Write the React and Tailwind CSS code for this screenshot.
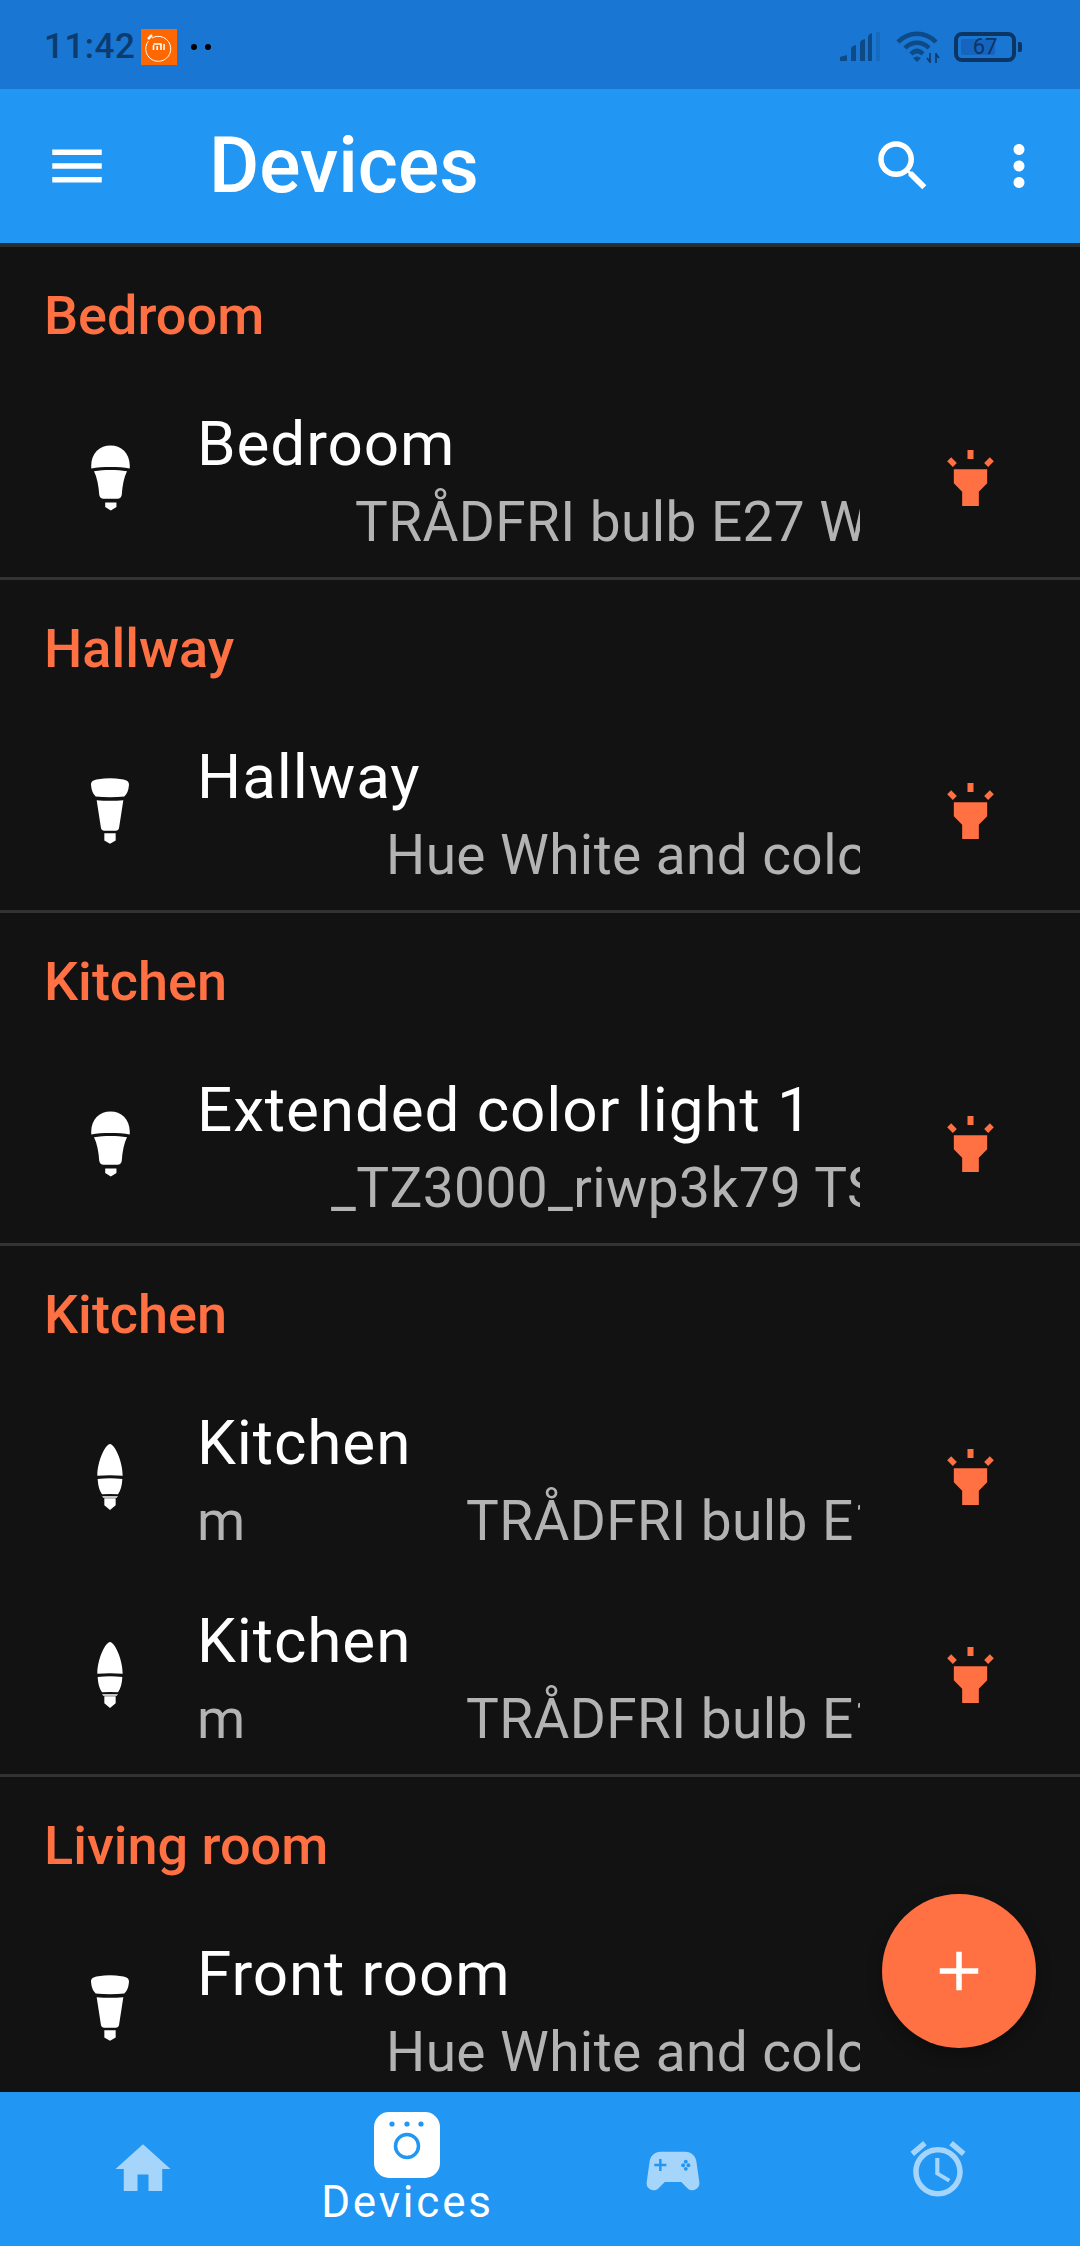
import React from "react";

const ORANGE = "#FF7043";

function Bulb({ kind }) {
  if (kind === "a19")
    return (
      <svg width="39" height="66" viewBox="0 0 118 197" fill="#fff">
        <path d="M1 70C-3 25 25 0 59 0C93 0 121 25 117 70C85 64 33 64 1 70Z" />
        <path d="M9 78C40 73 78 73 109 78C100 96 95 120 93 150Q91 161 80 161H38Q27 161 25 150C23 120 18 96 9 78Z" />
        <path d="M43 173H77V186L60 197L43 186Z" />
      </svg>
    );
  if (kind === "br30")
    return (
      <svg width="38" height="66" viewBox="0 0 114 197" fill="#fff">
        <path d="M22 3Q57 -2 92 3C108 5 114 10 114 20Q112 45 100 55Q57 60 14 55Q2 45 0 20C0 10 6 5 22 3Z" />
        <path d="M17 66Q57 70 97 66L84 150Q82 158 75 158H39Q32 158 30 150Z" />
        <path d="M40 165H74V187L57 197L40 187Z" />
      </svg>
    );
  return (
    <svg width="26" height="66" viewBox="0 0 76 198" fill="#fff">
      <path d="M0 95C0 50 25 0 38 0C51 0 76 50 76 95Q38 92 0 95Z" />
      <path d="M1 105Q38 100 75 105C74 125 70 140 62 151Q38 149 14 151C6 140 2 125 1 105Z" />
      <path d="M14 157H62L58 161H18Z" />
      <path d="M21 163H55V184L38 198L21 184Z" />
    </svg>
  );
}

function Flash() {
  return (
    <svg width="47" height="56" viewBox="320 90 140 168" fill={ORANGE}>
      <path d="M381 90H399V117H381Z" />
      <path d="M320 124L332 112L349 129L337 141Z" />
      <path d="M460 124L448 112L431 129L443 141Z" />
      <path d="M340 148H440V190L415 215V258H365V215L340 190Z" />
    </svg>
  );
}

function Row({ kind, name, pre, subClass, sub }) {
  return (
    <div className="flex h-[198px] items-center">
      <div className="flex w-[197px] justify-center pl-[23px]">
        <Bulb kind={kind} />
      </div>
      <div className="h-full w-[663px] overflow-hidden whitespace-nowrap pt-[26px]">
        <div className="text-[62px] leading-[78px] tracking-[0.9px] text-white">{name}</div>
        <div className={"flex text-[55px] leading-[78px] tracking-[0.4px] text-[#b3b3b3] " + subClass}>
          {pre ? <span className="w-[269px] shrink-0">{pre}</span> : null}
          <span>{sub}</span>
        </div>
      </div>
      <div className="flex flex-1 justify-center">
        <Flash />
      </div>
    </div>
  );
}

function Section({ title, last, children }) {
  return (
    <section className={last ? "" : "border-b-[3px] border-[#333333]"}>
      <div className="h-[132px] pl-[44px] pt-[37px] text-[54px] font-medium leading-[64px] text-[#FF7043]">{title}</div>
      {children}
    </section>
  );
}

function NavIcon({ d, extra }) {
  return (
    <svg width="66" height="66" viewBox="0 0 24 24" fill="#A6D5FB">
      <path d={d} />
      {extra}
    </svg>
  );
}

export default function App() {
  return (
    <div className="relative flex h-[2246px] w-[1080px] flex-col overflow-hidden bg-[#121212] font-['Roboto',sans-serif]">
      {/* status bar */}
      <div className="flex h-[89px] shrink-0 items-center bg-[#1976D2] pl-[44px] pr-[58px] pt-[4px]">
        <span className="text-[35px] font-medium leading-none tracking-[0.5px] text-[#0c3b6e]">11:42</span>
        <div className="ml-[6px] flex h-[36px] w-[36px] items-center justify-center bg-[#FF6700]">
          <svg width="30" height="30" viewBox="0 0 30 30" fill="none">
            <path d="M8 6A12.5 12.5 0 1 1 4.5 9" stroke="#fff" strokeWidth="1" />
            <path d="M4 7L8 3" stroke="#fff" strokeWidth="2.5" />
            <path d="M9.5 12H17V18M13.2 14V18M9.5 13V18M20 12V18" stroke="#fff" strokeWidth="1.6" />
          </svg>
        </div>
        <div className="ml-[14px] h-[6px] w-[6px] rounded-full bg-black" />
        <div className="ml-[8px] h-[6px] w-[6px] rounded-full bg-black" />
        <div className="flex-1" />
        <svg width="40" height="30" viewBox="0 0 40 30" fill="#0d4a86">
          <path d="M0 29V25L7 23V29Z" />
          <path d="M11 29V17Q11 15 13 14L16 13V29Z" />
          <path d="M20 29V11Q20 9 22 8L25 7V29Z" />
          <path d="M28 29V5Q28 3 30 2L32 1V29Z" />
          <path d="M36 29V0L40 0V29Z" opacity="0.25" />
        </svg>
        <svg className="ml-[16px]" width="44" height="32" viewBox="0 0 44 32" fill="none" stroke="#0d4a86" strokeWidth="4.5">
          <path d="M2 11C13 0 29 0 40 11" />
          <path d="M9 17C16 10 26 10 33 17" />
          <path d="M15 23C19 19 23 19 27 23" />
          <path d="M21 31L17 27Q21 24 25 27Z" fill="#0d4a86" stroke="none" />
          <path d="M34 22V32M31 27L34 31M40 32V22M43 27L40 23" strokeWidth="1.6" stroke="#0a3a6c" />
        </svg>
        <div className="relative ml-[14px] flex h-[30px] w-[62px] items-center justify-center rounded-[8px] border-[4px] border-[#0b3563]">
          <div className="absolute bottom-[3px] left-[3px] top-[3px] w-[34px] rounded-[2px] bg-[#1565C0]" />
          <span className="relative text-[22px] leading-none text-[#0b3563]">67</span>
        </div>
        <div className="ml-[2px] h-[10px] w-[4px] rounded-r-[2px] bg-[#0b3563]" />
      </div>

      {/* toolbar */}
      <div className="flex h-[154px] shrink-0 items-center bg-[#2196F3] pl-[44px] text-white">
        <svg width="66" height="66" viewBox="0 0 24 24" fill="#fff">
          <path d="M3 18h18v-2H3v2zm0-5h18v-2H3v2zm0-7v2h18V6H3z" />
        </svg>
        <h1 className="ml-[99px] text-[77px] font-medium leading-none">Devices</h1>
        <div className="flex-1" />
        <svg width="66" height="66" viewBox="0 0 24 24" fill="#fff">
          <path d="M15.5 14h-.79l-.28-.27C15.41 12.59 16 11.11 16 9.5 16 5.91 13.09 3 9.5 3S3 5.91 3 9.5 5.91 16 9.5 16c1.61 0 3.09-.59 4.23-1.57l.27.28v.79l5 4.99L20.49 19l-4.99-5zm-6 0C7.01 14 5 11.99 5 9.5S7.01 5 9.5 5 14 7.01 14 9.5 11.99 14 9.5 14z" />
        </svg>
        <svg className="ml-[50px] mr-[28px]" width="66" height="66" viewBox="0 0 24 24" fill="#fff">
          <path d="M12 8c1.1 0 2-.9 2-2s-.9-2-2-2-2 .9-2 2 .9 2 2 2zm0 2c-1.1 0-2 .9-2 2s.9 2 2 2 2-.9 2-2-.9-2-2-2zm0 6c-1.1 0-2 .9-2 2s.9 2 2 2 2-.9 2-2-.9-2-2-2z" />
        </svg>
      </div>
      <div className="h-[4px] shrink-0 bg-[#282d31]" />

      {/* list */}
      <main className="min-h-0 flex-1 overflow-hidden">
        <Section title="Bedroom">
          <Row kind="a19" name="Bedroom" subClass="pl-[158px]" sub="TRÅDFRI bulb E27 WS opal 980lm" />
        </Section>
        <Section title="Hallway">
          <Row kind="br30" name="Hallway" subClass="pl-[189px]" sub="Hue White and color ambiance" />
        </Section>
        <Section title="Kitchen">
          <Row kind="a19" name="Extended color light 1" subClass="pl-[134px]" sub="_TZ3000_riwp3k79 TS0505A" />
        </Section>
        <Section title="Kitchen">
          <Row kind="candle" name="Kitchen" pre="m" subClass="" sub="TRÅDFRI bulb E14 WS" />
          <Row kind="candle" name="Kitchen" pre="m" subClass="" sub="TRÅDFRI bulb E14 WS" />
        </Section>
        <Section title="Living room" last>
          <Row kind="br30" name="Front room" subClass="pl-[189px]" sub="Hue White and color ambiance" />
        </Section>
      </main>

      {/* bottom nav */}
      <nav className="grid h-[154px] shrink-0 grid-cols-4 items-center bg-[#2196F3] px-[10px]">
        <div className="flex justify-center">
          <NavIcon d="M10 20v-6h4v6h5v-8h3L12 3 2 12h3v8z" />
        </div>
        <div className="flex flex-col items-center">
          <svg className="-translate-x-[1px]" width="66" height="66" viewBox="0 0 66 66">
            <rect width="66" height="66" rx="15" fill="#fff" />
            <circle cx="18" cy="12" r="2.6" fill="#2196F3" />
            <circle cx="33" cy="12" r="2.6" fill="#2196F3" />
            <circle cx="47" cy="12" r="2.6" fill="#2196F3" />
            <circle cx="33" cy="34" r="11.5" fill="none" stroke="#2196F3" strokeWidth="3.5" />
          </svg>
          <span className="text-[44px] leading-[48px] tracking-[2.8px] text-white">Devices</span>
        </div>
        <div className="flex justify-center pt-[3px]">
          <NavIcon
            d="M21.58 16.09l-1.09-7.66C20.21 6.46 18.52 5 16.53 5H7.47C5.48 5 3.79 6.46 3.51 8.43l-1.09 7.66C2.2 17.63 3.39 19 4.94 19c.68 0 1.32-.27 1.8-.75L9 16h6l2.25 2.25c.48.48 1.13.75 1.8.75 1.56 0 2.75-1.37 2.53-2.91z"
            extra={
              <g fill="#2196F3">
                <path d="M5.2 9.35H6.95V7.6H7.85V9.35H9.6V10.25H7.85V12H6.95V10.25H5.2Z" />
                <circle cx="15.7" cy="9.9" r="0.7" />
                <circle cx="17.6" cy="9.9" r="0.7" />
                <circle cx="16.65" cy="8.6" r="0.7" />
                <circle cx="16.65" cy="11.2" r="0.7" />
              </g>
            }
          />
        </div>
        <div className="flex justify-center">
          <NavIcon d="M22 5.72l-4.6-3.86-1.29 1.53 4.6 3.86L22 5.72zM7.88 3.39L6.6 1.86 2 5.71l1.29 1.53 4.59-3.85zM12.5 8H11v6l4.75 2.85.75-1.23-4-2.37V8zM12 4c-4.97 0-9 4.03-9 9s4.02 9 9 9c4.97 0 9-4.03 9-9s-4.03-9-9-9zm0 16c-3.87 0-7-3.13-7-7s3.13-7 7-7 7 3.13 7 7-3.13 7-7 7z" />
        </div>
      </nav>

      {/* FAB */}
      <div className="absolute bottom-[198px] right-[44px] flex h-[154px] w-[154px] items-center justify-center rounded-full bg-[#FF7043] shadow-[0_6px_16px_rgba(0,0,0,0.3)]">
        <svg width="66" height="66" viewBox="0 0 24 24" fill="#fff">
          <path d="M19 13h-6v6h-2v-6H5v-2h6V5h2v6h6v2z" />
        </svg>
      </div>
    </div>
  );
}
